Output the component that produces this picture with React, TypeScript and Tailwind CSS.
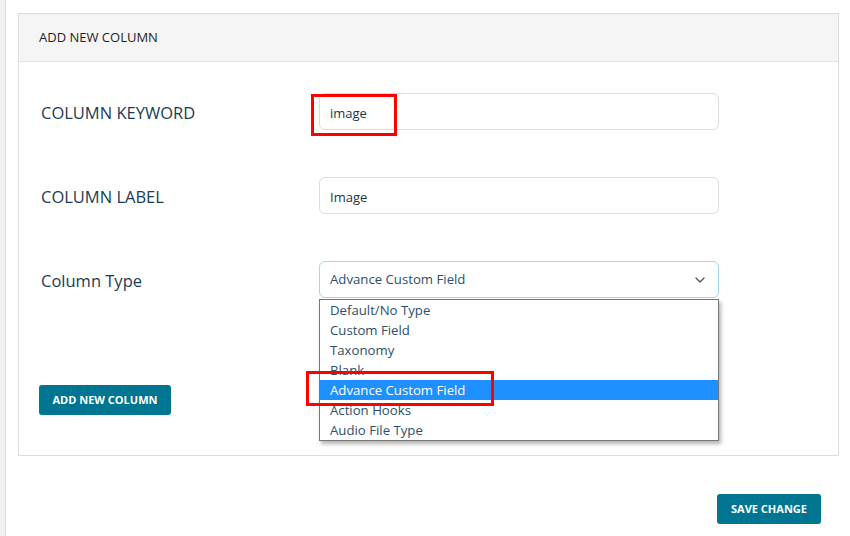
import { ChevronDown } from "lucide-react";

const types = [
  "Default/No Type",
  "Custom Field",
  "Taxonomy",
  "Blank",
  "Advance Custom Field",
  "Action Hooks",
  "Audio File Type",
];

export default function App() {
  return (
    <div className="flex h-[536px] w-[850px] overflow-hidden bg-white font-['Open_Sans',sans-serif]">
      <div className="w-[6px] shrink-0 border-r border-[#dcdcde] bg-[#f0f0f1]" />

      <div className="flex flex-1 flex-col pl-[12px] pt-[13px]">
        <section className="w-[821px] border border-[#dcdcde] bg-white">
          <div className="flex h-[48px] items-center border-b border-[#e2e4e7] bg-[#f5f5f5] pl-[20px]">
            <h2 className="text-[13px] font-normal text-[#1d2327]">ADD NEW COLUMN</h2>
          </div>

          <div className="px-[22px] pb-[40px] pt-[31px]">
            <div className="flex flex-col gap-[47px]">
              <div className="flex items-center">
                <label className="w-[278px] pt-[4px] text-[16.5px] text-[#1b3c52]">COLUMN KEYWORD</label>
                <div className="relative">
                  <input
                    defaultValue="image"
                    className="h-[37px] w-[400px] rounded-[6px] border border-[#dcdcde] px-[10px] pt-[3px] text-[13px] text-[#2c3338] outline-none"
                  />
                  <div className="pointer-events-none absolute left-[-8px] top-[1px] h-[42px] w-[86px] border-[3px] border-[#ff0000]" />
                </div>
              </div>

              <div className="flex items-center">
                <label className="w-[278px] pt-[4px] text-[16.5px] text-[#1b3c52]">COLUMN LABEL</label>
                <input
                  defaultValue="Image"
                  className="h-[37px] w-[400px] rounded-[6px] border border-[#dcdcde] px-[10px] pt-[3px] text-[13px] text-[#2c3338] outline-none"
                />
              </div>

              <div className="flex items-center">
                <label className="w-[278px] pt-[4px] text-[16.5px] text-[#1b3c52]">Column Type</label>
                <div className="relative">
                  <div className="flex h-[37px] w-[400px] items-center justify-between rounded-[6px] border border-[#9fd9ee] px-[10px] pt-[1px] text-[13.2px] text-[#2c4f6a]">
                    <span>Advance Custom Field</span>
                    <ChevronDown className="h-[16px] w-[16px] text-[#50575e]" strokeWidth={2} />
                  </div>

                  <ul className="absolute left-0 top-[38px] z-10 w-[400px] border border-[#767676] bg-white shadow-[2px_3px_4px_rgba(0,0,0,0.3)]">
                    {types.map((t) => (
                      <li
                        key={t}
                        className={
                          t === "Advance Custom Field"
                            ? "h-[20px] bg-[#1e90ff] px-[10px] text-[13.2px] leading-[20px] text-white"
                            : "h-[20px] px-[10px] text-[13.2px] leading-[20px] text-[#2c4f6a]"
                        }
                      >
                        {t}
                      </li>
                    ))}
                  </ul>
                  <div className="pointer-events-none absolute left-[-13px] top-[110px] z-20 h-[35px] w-[188px] border-[3px] border-[#ff0000]" />
                </div>
              </div>
            </div>

            <button
              type="button"
              className="-ml-[2px] mt-[87px] h-[30px] w-[132px] rounded-[3px] bg-[#007592] text-[11px] font-bold text-white"
            >
              ADD NEW COLUMN
            </button>
          </div>
        </section>

        <div className="flex justify-end pr-[29px] pt-[38px]">
          <button
            type="button"
            className="h-[30px] w-[104px] rounded-[3px] bg-[#007592] text-[11px] font-bold text-white"
          >
            SAVE CHANGE
          </button>
        </div>
      </div>
    </div>
  );
}
